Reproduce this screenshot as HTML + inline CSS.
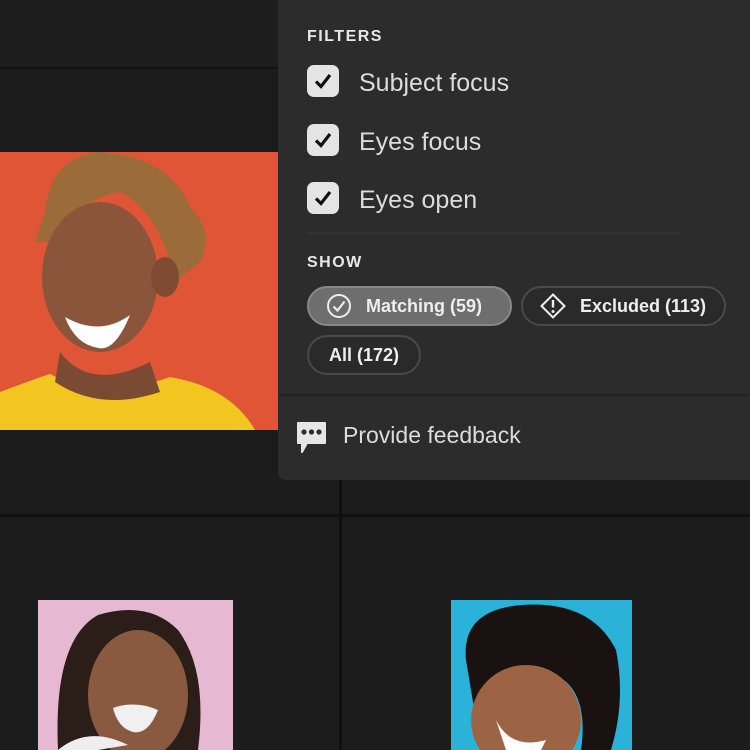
<!DOCTYPE html>
<html><head><meta charset="utf-8"><style>
*{margin:0;padding:0;box-sizing:border-box}
body{width:750px;height:750px;overflow:hidden;background:#1c1c1c;font-family:"Liberation Sans",sans-serif;position:relative}
.abs{position:absolute}
.panel{left:278px;top:0;width:472px;height:480px;background:#2c2c2c;border-bottom-left-radius:8px}
.h{color:#e8e8e8;font-weight:bold;font-size:16px;letter-spacing:1.5px;left:29px}
.cb{left:29px;width:32px;height:32px;background:#e4e4e4;border-radius:7px}
.lbl{left:81px;color:#dcdcdc;font-size:25px}
.chip{height:40px;border-radius:20px;border:2px solid #4a4a4a;color:#eee;font-weight:bold;font-size:18px;display:flex;align-items:center}
</style></head><body>
<div class="abs" style="left:0;top:0;width:278px;height:67px;background:#1d1d1d"></div>
<div class="abs" style="left:0;top:67px;width:278px;height:2px;background:#121212"></div>
<!-- orange photo -->
<svg class="abs" style="left:0;top:152px" width="278" height="278" viewBox="0 0 278 278">
<rect width="278" height="278" fill="#e05535"/>
<path d="M0 240 Q40 225 50 222 Q100 250 170 225 Q230 235 255 278 L0 278Z" fill="#f3c520"/>
<path d="M60 200 Q90 240 150 210 L160 240 Q100 260 55 230Z" fill="#7a4a32"/>
<path d="M45 60 Q50 5 100 0 Q170 5 190 55 Q215 80 200 110 L175 130 Q160 60 120 40 Q70 50 55 90 L35 90Z" fill="#9b6b3a"/>
<ellipse cx="100" cy="125" rx="58" ry="75" fill="#8a553a"/>
<path d="M65 165 Q100 185 130 163 Q115 200 98 196 Q75 192 65 165Z" fill="#fff"/>
<ellipse cx="165" cy="125" rx="14" ry="20" fill="#7f4c33"/>
</svg>
<div class="abs" style="left:0;top:514px;width:750px;height:3px;background:#111"></div>
<div class="abs" style="left:339px;top:480px;width:3px;height:270px;background:#111"></div>
<!-- pink photo -->
<svg class="abs" style="left:38px;top:600px" width="195" height="150" viewBox="0 0 195 150">
<rect width="195" height="150" fill="#e7b8d2"/>
<path d="M20 150 Q15 40 60 15 Q110 0 140 30 Q170 70 160 150Z" fill="#2b1d17"/>
<ellipse cx="100" cy="95" rx="50" ry="65" fill="#8a5a40"/>
<path d="M75 108 Q98 100 120 110 Q110 135 95 132 Q80 128 75 108Z" fill="#f0f0f0"/>
<path d="M20 150 Q50 125 90 145 L60 150Z" fill="#eee"/>
</svg>
<!-- blue photo -->
<svg class="abs" style="left:451px;top:600px" width="181" height="150" viewBox="0 0 181 150">
<rect width="181" height="150" fill="#2bb2d8"/>
<path d="M15 60 Q10 10 70 5 Q140 0 165 50 Q175 100 160 150 L130 150 Q140 80 90 70 Q40 80 25 120Z" fill="#1a1210"/>
<ellipse cx="75" cy="120" rx="55" ry="55" fill="#9c6445"/>
<path d="M45 120 Q60 150 95 140 L90 150 L55 150Z" fill="#fff"/>
</svg>

<div class="abs panel">
  <div class="abs h" style="top:28px">FILTERS</div>
  <div class="abs cb" style="top:65px"><svg width="32" height="32"><path d="M9 16.5 L14 21.5 L23 10" stroke="#111" stroke-width="3.2" fill="none"/></svg></div>
  <div class="abs lbl" style="top:69px">Subject focus</div>
  <div class="abs cb" style="top:124px"><svg width="32" height="32"><path d="M9 16.5 L14 21.5 L23 10" stroke="#111" stroke-width="3.2" fill="none"/></svg></div>
  <div class="abs lbl" style="top:128px">Eyes focus</div>
  <div class="abs cb" style="top:182px"><svg width="32" height="32"><path d="M9 16.5 L14 21.5 L23 10" stroke="#111" stroke-width="3.2" fill="none"/></svg></div>
  <div class="abs lbl" style="top:186px">Eyes open</div>
  <div class="abs" style="left:29px;top:232px;width:372px;height:2px;background:#333"></div>
  <div class="abs h" style="top:254px">SHOW</div>
  <div class="abs chip" style="left:29px;top:286px;width:205px;background:#6e6e6e;border-color:#888">
    <svg style="margin-left:17px" width="26" height="26"><circle cx="13" cy="13" r="11" stroke="#eee" stroke-width="2" fill="none"/><path d="M7.5 13.5 L11.5 17.5 L18.5 8.5" stroke="#eee" stroke-width="2.2" fill="none"/></svg>
    <span style="margin-left:14px">Matching (59)</span></div>
  <div class="abs chip" style="left:243px;top:286px;width:205px;background:#2a2a2a">
    <svg style="margin-left:17px" width="26" height="26"><path d="M13 1.5 L24.5 13 L13 24.5 L1.5 13Z" stroke="#eee" stroke-width="2" fill="none"/><path d="M13 7 V14.5" stroke="#eee" stroke-width="2.4"/><circle cx="13" cy="18.5" r="1.5" fill="#eee"/></svg>
    <span style="margin-left:14px">Excluded (113)</span></div>
  <div class="abs chip" style="left:29px;top:335px;width:114px;background:#2a2a2a;justify-content:center">All (172)</div>
  <div class="abs" style="left:0;top:394px;width:472px;height:2px;background:#232323"></div>
  <svg class="abs" style="left:18px;top:421px" width="31" height="32"><path d="M2 2 H29 V22 H11 L6 31 L6 22 H2Z" fill="#e6e6e6" stroke="#e6e6e6" stroke-linejoin="round" stroke-width="2"/><circle cx="8" cy="11" r="2.6" fill="#2c2c2c"/><circle cx="15.5" cy="11" r="2.6" fill="#2c2c2c"/><circle cx="23" cy="11" r="2.6" fill="#2c2c2c"/></svg>
  <div class="abs" style="left:65px;top:422px;color:#dcdcdc;font-size:23px">Provide feedback</div>
</div>
</body></html>
